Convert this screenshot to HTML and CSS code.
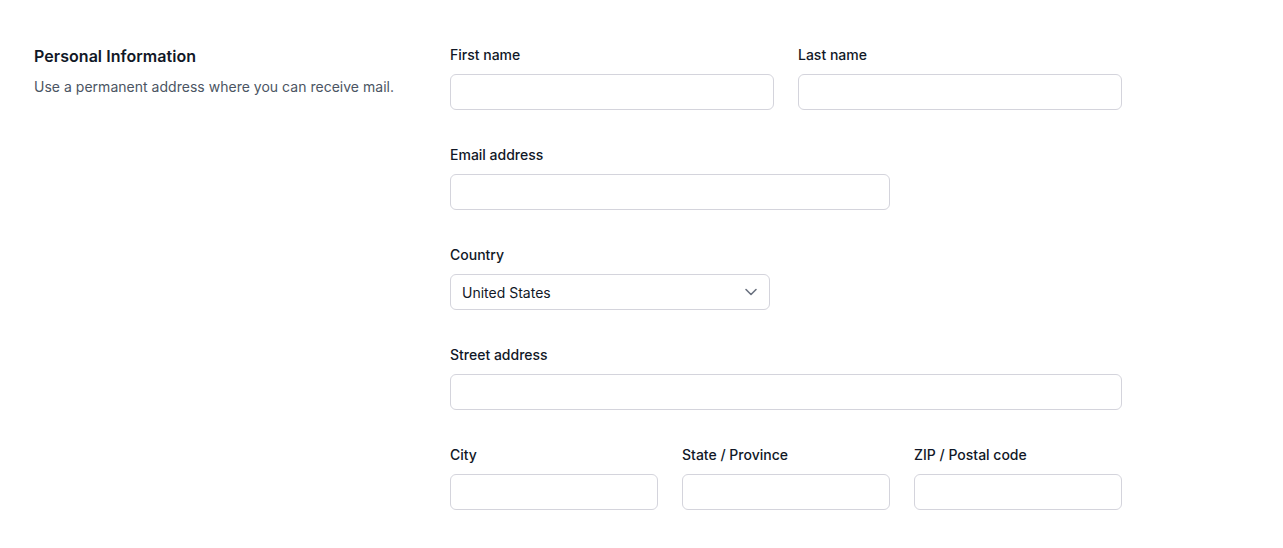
FILE: index.html
```html
<!DOCTYPE html>
<html lang="en">
<head>
<meta charset="utf-8">
<title>Personal Information</title>
<link rel="stylesheet" href="styles.css">
</head>
<body>
<div class="page">
  <section class="section">
    <div class="intro">
      <h2 class="title">Personal Information</h2>
      <p class="desc">Use a permanent address where you can receive mail.</p>
    </div>
    <div class="form">
      <div class="field span-3">
        <label class="label">First name</label>
        <input class="input" type="text">
      </div>
      <div class="field span-3">
        <label class="label">Last name</label>
        <input class="input" type="text">
      </div>
      <div class="field span-4">
        <label class="label">Email address</label>
        <input class="input" type="email">
      </div>
      <div class="field span-3">
        <label class="label">Country</label>
        <div class="select">
          <span>United States</span>
          <svg class="chev" viewBox="0 0 20 20" width="20" height="20"><path d="M5 7.5l5 5 5-5" fill="none" stroke="#6b7280" stroke-width="1.6" stroke-linecap="round" stroke-linejoin="round"/></svg>
        </div>
      </div>
      <div class="field span-6">
        <label class="label">Street address</label>
        <input class="input" type="text">
      </div>
      <div class="field span-2">
        <label class="label">City</label>
        <input class="input" type="text">
      </div>
      <div class="field span-2">
        <label class="label">State / Province</label>
        <input class="input" type="text">
      </div>
      <div class="field span-2">
        <label class="label">ZIP / Postal code</label>
        <input class="input" type="text">
      </div>
    </div>
  </section>
</div>
</body>
</html>
```
FILE: styles.css
```css
* { box-sizing: border-box; }
html, body { margin: 0; padding: 0; background: #ffffff; }
body { font-family: Inter, "Noto Sans", sans-serif; color: #111827; }
.page { padding: 42px 34px; }
.section { display: grid; grid-template-columns: 384px 672px; column-gap: 32px; }
.title { margin: 0; font-size: 16px; line-height: 28px; font-weight: 600; color: #111827; letter-spacing: 0.05px; }
.desc { margin: 5px 0 0; font-size: 14px; line-height: 24px; color: #4b5563; letter-spacing: 0.02px; }
.form { display: grid; grid-template-columns: repeat(6, 1fr); column-gap: 24px; row-gap: 32px; }
.span-2 { grid-column: span 2; }
.span-3 { grid-column: span 3; }
.span-4 { grid-column: span 4; }
.span-6 { grid-column: span 6; }
.field { display: flex; flex-direction: column; }
.label { font-size: 14px; line-height: 24px; font-weight: 500; color: #111827; padding-top: 1px; }
.input, .select { margin-top: 7px; height: 36px; border: 1px solid #d4d4dc; border-radius: 6px; background: #fff; font: inherit; font-size: 14px; }
.select { width: 320px; display: flex; align-items: center; justify-content: space-between; padding: 0 8px 0 11px; color: #111827; }
.chev { display: block; }
```
